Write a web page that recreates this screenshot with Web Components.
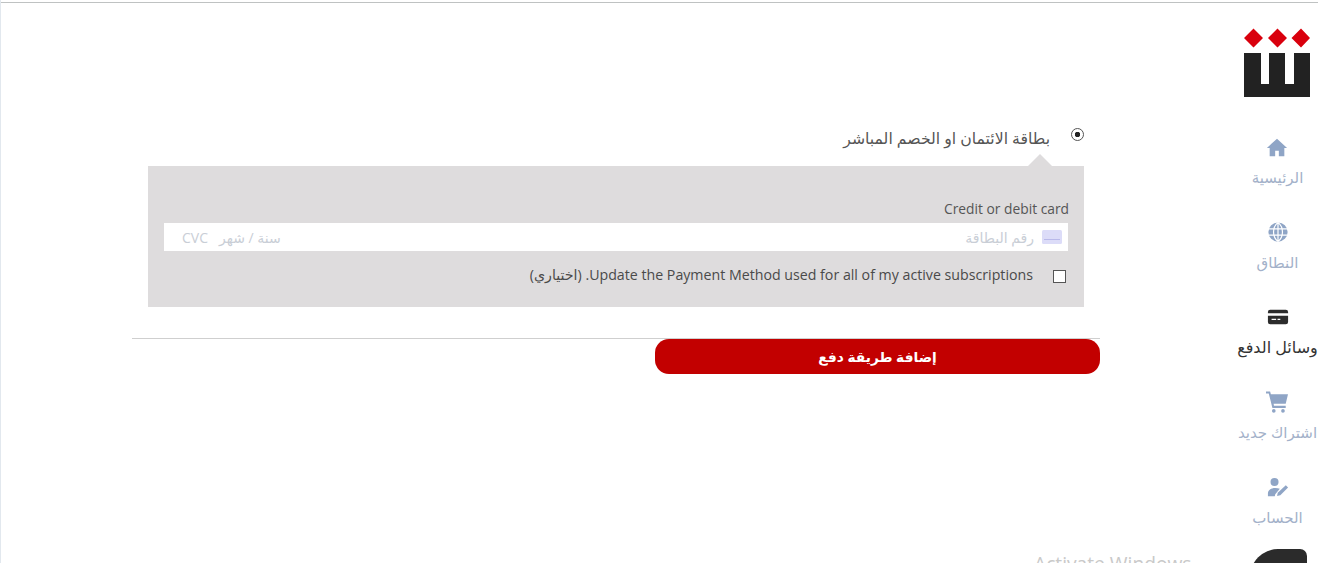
<!DOCTYPE html>
<html lang="ar">
<head>
<meta charset="utf-8">
<title>وسائل الدفع</title>
<style>
  html, body { margin: 0; height: 100%; background: #fff; overflow: hidden; }
  body { font-family: "Open Sans", "DejaVu Sans", sans-serif; }
</style>
</head>
<body>
<app-shell>
  <payment-form slot="main"></payment-form>
  <side-nav slot="side">
    <nav-item label="الرئيسية" icon="home"></nav-item>
    <nav-item label="النطاق" icon="globe"></nav-item>
    <nav-item label="وسائل الدفع" icon="card" active></nav-item>
    <nav-item label="اشتراك جديد" icon="cart"></nav-item>
    <nav-item label="الحساب" icon="user"></nav-item>
  </side-nav>
</app-shell>

<script>
const ICONS = {
  home: '<path d="M12 3 1 13h3v9h6v-6h4v6h6v-9h3z"/>',
  globe: '<circle cx="12" cy="12" r="10.5"/><path fill="none" stroke="#fff" stroke-width="1.300" d="M1.500 8.600h21M1.500 15.400h21M12 1.500v21M12 1.500C5.500 7 5.500 17 12 22.500M12 1.500c6.500 5.500 6.500 15.500 0 21"/>',
  card: '<path d="M3.500 4h17A2.500 2.500 0 0 1 23 6.500V8H1V6.500A2.500 2.500 0 0 1 3.500 4zM1 10.500h22v7a2.500 2.500 0 0 1-2.500 2.500h-17A2.500 2.500 0 0 1 1 17.500z"/><path fill="#fff" d="M5 14h5v1.400H5zM11.500 14h3v1.400h-3z"/>',
  cart: '<path d="M0 .5h4.500l.8 3H24l-2.500 10.500H8.300l.4 2h12.800v2.500H7L3 2.700H0z"/><circle cx="8.500" cy="21.700" r="2"/><circle cx="18.500" cy="21.700" r="2"/>',
  user: '<circle cx="8.200" cy="6.500" r="4.400"/><path d="M1 22v-3c0-3.500 3-6 8-6 2 0 3.700.4 5 1l-5 6-.5 2z"/><path d="M20.500 10 23 12.500 14.500 21l-3.500.8.700-3.500z"/>'
};

class AppShell extends HTMLElement {
  constructor() {
    super();
    this.attachShadow({ mode: 'open' });
    this.shadowRoot.innerHTML = `
    <style>
      :host {
        display: flex;
        height: 563px;
        box-sizing: border-box;
        border-left: 1px solid #e2e8ee;
        position: relative;
        overflow: hidden;
      }
      .topline { position: absolute; top: 2px; left: 0; right: 0; height: 1px; background: #bfc2c2; }
      .main { flex: 1; min-width: 0; }
      .watermark {
        position: absolute;
        left: 1033px;
        top: 550px;
        font: 19.200px "Open Sans", sans-serif;
        color: #c9c9c9;
        white-space: nowrap;
      }
      .bubble {
        position: absolute;
        left: 1249px;
        top: 549px;
        width: 57px;
        height: 60px;
        background: #2b2b2b;
        border-radius: 28px 7px 0 0;
      }
    </style>
    <div class="topline"></div>
    <div class="main"><slot name="main"></slot></div>
    <slot name="side"></slot>
    <div class="watermark">Activate Windows</div>
    <div class="bubble"></div>
    `;
  }
}

class SideNav extends HTMLElement {
  constructor() {
    super();
    this.attachShadow({ mode: 'open' });
    this.shadowRoot.innerHTML = `
    <style>
      :host {
        display: flex;
        flex-direction: column;
        align-items: center;
        width: 81px;
        flex: none;
        padding-top: 28px;
        box-sizing: border-box;
      }
      svg.logo { display: block; align-self: flex-start; margin: 0 0 39px 7px; }
      .items { display: flex; flex-direction: column; align-items: center; gap: 16px; width: 100%; }
    </style>
    <svg class="logo" width="66" height="69" viewBox="0 0 66 69">
      <path fill="#d9000d" d="M9.500 0.500l9.500 9.500-9.500 9.500L0 10zM33.500 0.500l9.500 9.500-9.500 9.500L24 10zM57 0.500l9 9.500-9 9.500L47.500 10z"/>
      <path fill="#222" d="M0 25h17v31h8V25h16v31h9V25h16v44H0z"/>
    </svg>
    <div class="items"><slot></slot></div>
    `;
  }
}

class NavItem extends HTMLElement {
  constructor() {
    super();
    this.attachShadow({ mode: 'open' });
  }

  connectedCallback() {
    this.render();
  }

  render() {
    const active = this.hasAttribute('active');
    const color = active ? '#2c2c2c' : '#8fa5c6';
    const text = active ? '#333' : '#a3b1c9';
    this.shadowRoot.innerHTML = `
    <style>
      :host {
        display: flex;
        flex-direction: column;
        align-items: center;
        gap: 9px;
        height: 69px;
        white-space: nowrap;
      }
      svg { display: block; fill: ${color}; }
      span { font: ${active ? 16 : 15}px/20px "Open Sans", "DejaVu Sans", sans-serif; color: ${text}; direction: rtl; }
    </style>
    <svg width="22" height="22" viewBox="0 0 24 24">${ICONS[this.getAttribute('icon')]}</svg>
    <span>${this.getAttribute('label')}</span>
    `;
  }
}

class PaymentForm extends HTMLElement {
  constructor() {
    super();
    this.attachShadow({ mode: 'open' });
    this.shadowRoot.innerHTML = `
    <style>
      :host {
        display: block;
        padding: 125px 137px 0 131px;
        font-family: "Open Sans", "DejaVu Sans", sans-serif;
        color: #444;
      }
      .option {
        display: flex;
        justify-content: flex-end;
        gap: 21px;
        height: 41px;
        font-size: 15.700px;
        line-height: 26px;
        color: #555;
        margin-right: 16px;
      }
      .radio {
        width: 13px;
        height: 13px;
        margin-top: 3px;
        box-sizing: border-box;
        border: 1px solid #555;
        border-radius: 50%;
        background: radial-gradient(circle, #222 0 2.500px, transparent 3px);
      }
      .box {
        position: relative;
        margin: 0 16px;
        height: 141px;
        box-sizing: border-box;
        background: #dedcdd;
        padding: 32px 16px 0;
      }
      .box::before {
        content: "";
        position: absolute;
        top: -12px;
        right: 32px;
        border: 12px solid transparent;
        border-top: 0;
        border-bottom-color: #dedcdd;
      }
      .title { text-align: right; font-size: 13.800px; line-height: 22px; height: 25px; color: #555; margin-right: -1px; }
      .field {
        display: flex;
        align-items: center;
        height: 28px;
        background: #fff;
        color: #c9ced6;
        font-size: 14px;
        padding: 0 6px 0 18px;
      }
      .field .num { margin-left: auto; margin-right: 8px; direction: rtl; }
      .field .exp { margin-left: 11px; direction: rtl; }
      .field svg { display: block; }
      .update {
        display: flex;
        justify-content: flex-end;
        align-items: center;
        gap: 20px;
        height: 46px;
        font-size: 14.200px;
        color: #4a4a4a;
        margin-right: 2px;
      }
      .update i {
        width: 13px;
        height: 13px;
        box-sizing: border-box;
        border: 1px solid #555;
        background: #fff;
        margin-top: 5px;
      }
      hr { margin: 31px 0 0; border: 0; border-top: 1px solid #cfcfcf; }
      .actions { display: flex; justify-content: flex-end; }
      button {
        width: 445px;
        height: 35px;
        border: 0;
        border-radius: 14px;
        background: #c20000;
        color: #fff;
        font: bold 13.800px "Open Sans", "DejaVu Sans", sans-serif;
        direction: rtl;
        padding: 0;
      }
    </style>
    <div class="option">
      <span dir="rtl">بطاقة الائتمان او الخصم المباشر</span>
      <span class="radio"></span>
    </div>
    <div class="box">
      <div class="title">Credit or debit card</div>
      <div class="field">
        <span>CVC</span>
        <span class="exp">سنة / شهر</span>
        <span class="num">رقم البطاقة</span>
        <svg width="20" height="14" viewBox="0 0 20 14">
          <rect width="20" height="14" rx="1.500" fill="#dcdcf8"/>
          <path fill="#b9b9ea" d="M2 9h16v1H2z"/>
        </svg>
      </div>
      <div class="update">
        <span dir="ltr">(اختياري) .Update the Payment Method used for all of my active subscriptions</span>
        <i></i>
      </div>
    </div>
    <hr>
    <div class="actions"><button>إضافة طريقة دفع</button></div>
    `;
  }
}

customElements.define('app-shell', AppShell);
customElements.define('side-nav', SideNav);
customElements.define('nav-item', NavItem);
customElements.define('payment-form', PaymentForm);
</script>
</body>
</html>
